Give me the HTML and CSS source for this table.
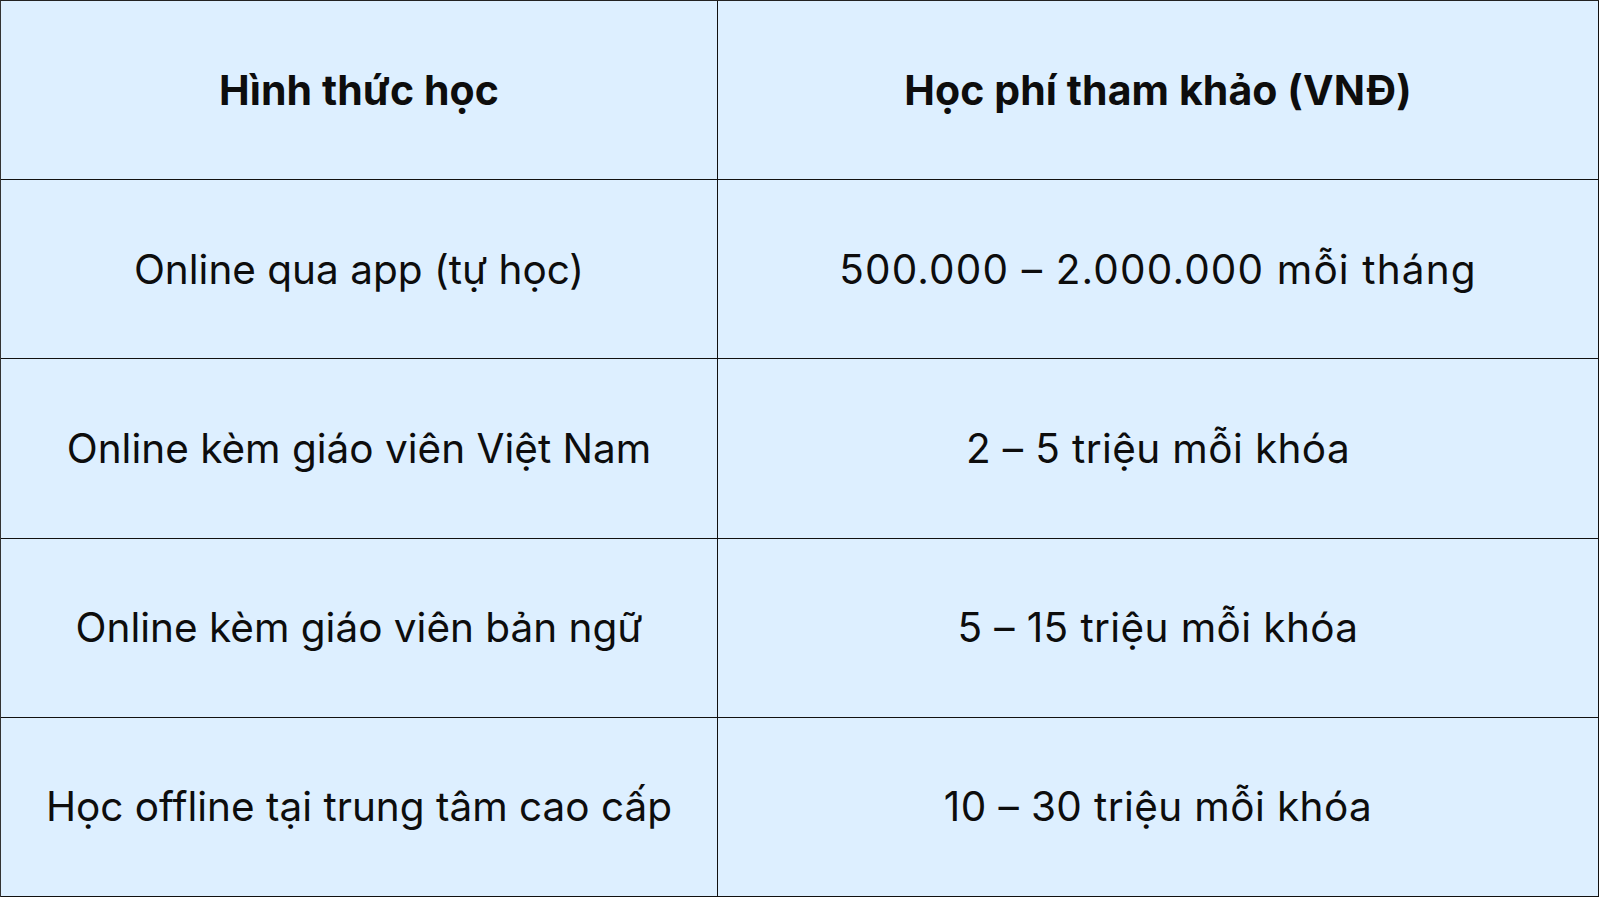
FILE: index.html
```html
<!DOCTYPE html>
<html lang="vi">
<head>
<meta charset="utf-8">
<title>Học phí tham khảo</title>
<link rel="stylesheet" href="styles.css">
</head>
<body>
<div class="table">
  <div class="cell head">Hình thức học</div>
  <div class="cell head">Học phí tham khảo (VNĐ)</div>
  <div class="cell">Online qua app (tự học)</div>
  <div class="cell price wide">500.000 – 2.000.000 mỗi tháng</div>
  <div class="cell">Online kèm giáo viên Việt Nam</div>
  <div class="cell price">2 – 5 triệu mỗi khóa</div>
  <div class="cell">Online kèm giáo viên bản ngữ</div>
  <div class="cell price">5 – 15 triệu mỗi khóa</div>
  <div class="cell">Học offline tại trung tâm cao cấp</div>
  <div class="cell price">10 – 30 triệu mỗi khóa</div>
</div>
</body>
</html>
```
FILE: styles.css
```css
html, body {
  margin: 0;
  padding: 0;
  background: #ffffff;
}
.table {
  width: 1599px;
  height: 897px;
  box-sizing: border-box;
  display: grid;
  grid-template-columns: 717px 1fr;
  grid-template-rows: repeat(5, 1fr);
  background: #ddefff;
  border-top: 1.5px solid #222;
  border-left: 1.5px solid #333;
  font-family: "Inter", "Noto Sans", sans-serif;
  color: #0d0d0d;
}
.cell {
  display: flex;
  align-items: center;
  justify-content: center;
  border-right: 1.5px solid #111;
  border-bottom: 1.5px solid #111;
  font-size: 40.5px;
  font-weight: 400;
  white-space: nowrap;
  letter-spacing: 0;
}
.head {
  font-weight: 700;
  font-size: 41px;
  letter-spacing: 0.1px;
}
.price {
  letter-spacing: 0.4px;
}
.wide {
  letter-spacing: 1.15px;
}
```
